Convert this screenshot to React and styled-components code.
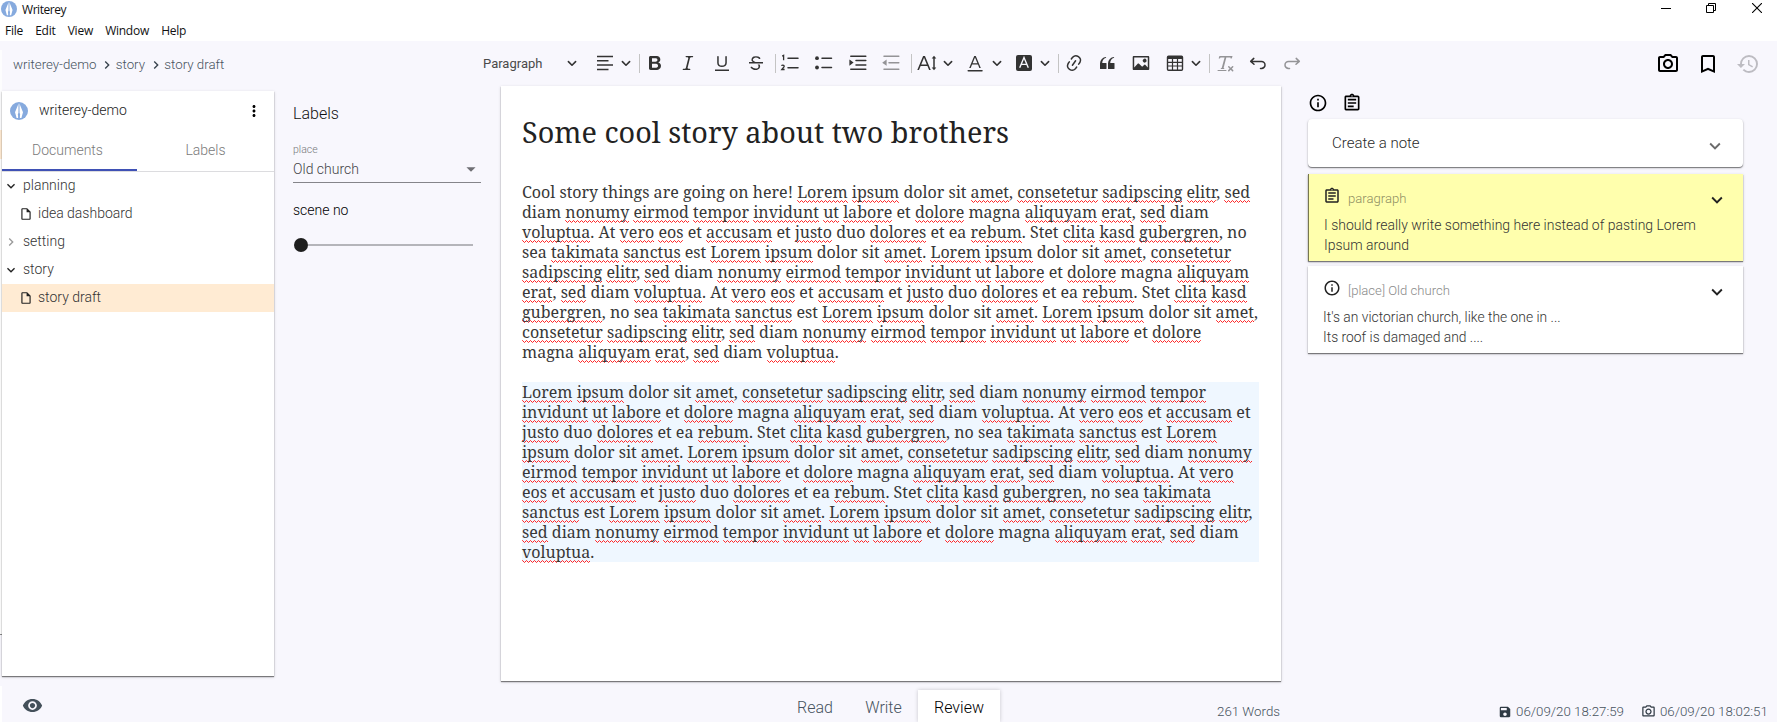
import React from "react";
import styled, { createGlobalStyle, css } from "styled-components";
import {
  MdOutlinePhotoCamera,
  MdBookmarkBorder,
  MdHistory,
  MdInfoOutline,
  MdOutlineAssignment,
  MdVisibility,
  MdSave,
  MdOutlineInsertDriveFile,
  MdMoreVert,
  MdExpandMore,
  MdChevronRight,
  MdArrowDropDown,
} from "react-icons/md";

const GlobalStyle = createGlobalStyle`
  * { box-sizing: border-box; }
  body { margin: 0; background: #fff; font-family: Roboto, "Liberation Sans", sans-serif; font-weight: 300; }
  svg { display: block; flex: none; }
`;

const Window = styled.div`
  width: 1777px;
  height: 722px;
  overflow: hidden;
  display: flex;
  flex-direction: column;
`;

/* window chrome */
const Chrome = styled.header`
  height: 41px;
  flex: none;
  background: #fff;
  font-family: "Open Sans", "Noto Sans", sans-serif;
  font-weight: 400;
  font-size: 12px;
  color: #111;
`;
const TitleBar = styled.div`
  height: 20px;
  display: flex;
  align-items: center;
  padding: 0 15px 2px 1px;
`;
const Title = styled.span`
  margin-left: 5px;
  flex: 1;
  padding-top: 1px;
  letter-spacing: -0.45px;
`;
const WindowButtons = styled.div`
  display: flex;
  gap: 35px;
  padding: 0 0 2px;
  svg:last-child { margin-left: 1px; }
`;
const MenuBar = styled.nav`
  display: flex;
  gap: 12.2px;
  padding-left: 5px;
  line-height: 22px;
  letter-spacing: -0.25px;
`;

/* application area */
const Shell = styled.div`
  flex: 1;
  display: flex;
  background: #f8f7fd;
  min-height: 0;
`;
const Edge = styled.div`
  width: 2px;
  flex: none;
  display: flex;
  flex-direction: column;
`;
const EdgePart = styled.div`
  height: ${(p) => p.$h}px;
  background: ${(p) => p.$c};
`;
const Workspace = styled.div`
  flex: 1;
  display: flex;
  flex-direction: column;
  min-width: 0;
`;
const TopBar = styled.div`
  height: 45px;
  flex: none;
  display: flex;
  align-items: flex-start;
`;
const Breadcrumb = styled.div`
  width: 481px;
  height: 46px;
  flex: none;
  display: flex;
  align-items: center;
  padding: 1px 0 0 11px;
  font-size: 13.3px;
  color: #47535d;
  svg { color: #37424c; margin: 1px 0.5px 0 2.8px; }
`;
const Toolbar = styled.div`
  display: flex;
  align-items: center;
  height: 44px;
  width: 1173px;
  color: #333;
`;
const StyleName = styled.span`
  width: 60px;
  font-size: 13px;
  font-weight: 400;
  color: #4a4a4a;
`;
const Tool = styled.span`
  width: ${(p) => p.$w || 20}px;
  margin-left: ${(p) => p.$ml}px;
  flex: none;
  display: flex;
  justify-content: center;
  opacity: ${(p) => (p.$off ? 0.5 : 1)};
`;
const Separator = styled.span`
  width: 1px;
  height: 19px;
  margin-left: ${(p) => p.$ml}px;
  background: #c4c4c4;
`;
const Actions = styled.div`
  display: flex;
  gap: 16px;
  padding-top: 11px;
  color: #000;
  svg:last-child { color: #bdbcc2; }
`;

const Main = styled.div`
  flex: 1;
  display: flex;
  min-height: 0;
`;

const raised = css`
  background: #fff;
  box-shadow: 0 1px 1px rgba(0, 0, 0, 0.45), 0 1px 3px rgba(0, 0, 0, 0.18);
`;

/* project sidebar */
const Sidebar = styled.aside`
  ${raised}
  width: 272px;
  height: 585px;
  margin-top: 5px;
  flex: none;
`;
const ProjectHeader = styled.div`
  height: 39px;
  display: flex;
  align-items: center;
  padding: 1px 11px 0 8px;
  color: #000;
`;
const ProjectName = styled.span`
  flex: 1;
  margin-left: 11px;
  padding-bottom: 2px;
  font-size: 14px;
  color: #222;
`;
const Tabs = styled.div`
  display: flex;
  height: 42px;
  border-bottom: 1px solid #dcdcdf;
`;
const Tab = styled.div`
  flex: ${(p) => (p.$active ? "none" : 1)};
  width: 135px;
  height: 41px;
  display: flex;
  align-items: center;
  justify-content: center;
  font-size: 14px;
  color: #7a7a7a;
  ${(p) => p.$active && "border-bottom: 2px solid #3f51b5;"}
  padding: ${(p) => (p.$active ? "0 4px 0 0" : "0 0 2px 0")};
`;
const TreeRow = styled.div`
  height: 28px;
  display: flex;
  align-items: center;
  font-size: 14px;
  color: #333;
  padding: 0 0 2px ${(p) => (p.$file ? 17 : 1)}px;
  background: ${(p) => (p.$selected ? "#ffebd3" : "transparent")};
`;
const TreeIcon = styled.span`
  width: ${(p) => (p.$file ? 19 : 20)}px;
  padding-top: 1px;
  color: ${(p) => (p.$dim ? "#9a9a9a" : "#222")};
`;

/* labels panel */
const LabelsPanel = styled.section`
  width: 188px;
  margin: 0 20px 0 19px;
  flex: none;
  display: flex;
  flex-direction: column;
`;
const PanelTitle = styled.h2`
  margin: 18px 0 0;
  font-size: 16px;
  line-height: 20px;
  font-weight: 300;
  color: #111;
`;
const FieldLabel = styled.div`
  margin-top: 19px;
  font-size: 10.5px;
  line-height: 14px;
  color: #77777b;
`;
const Select = styled.div`
  height: 26px;
  display: flex;
  align-items: center;
  justify-content: space-between;
  padding-bottom: 1px;
  border-bottom: 1px solid #85858a;
  font-size: 14px;
  color: #444448;
  svg { color: #6f6f74; margin-right: -1px; }
`;
const SliderLabel = styled.div`
  margin-top: 18px;
  line-height: 18px;
  font-size: 14px;
  color: #000;
`;
const Slider = styled.div`
  display: flex;
  align-items: center;
  margin: 19px 0 0 1px;
`;
const Knob = styled.span`
  width: 14px;
  height: 14px;
  border-radius: 50%;
  background: #1e1e1e;
`;
const Track = styled.span`
  width: 165px;
  height: 2px;
  background: #b5b5ba;
`;

/* document */
const Page = styled.article`
  ${raised}
  width: 780px;
  flex: none;
  padding: 0 22px 0 21px;
  font-family: "Noto Serif", "DejaVu Serif Condensed", serif;
  font-weight: 400;
  color: #222;
`;
const DocTitle = styled.h1`
  margin: 26px 0 30px;
  font-size: 28.8px;
  line-height: 40px;
  font-weight: 400;
  white-space: nowrap;
`;
const Paragraph = styled.p`
  margin: 0 0 20px;
  font-size: 16.02px;
  line-height: 20px;
  white-space: pre-line;
  color: #383838;
  background: ${(p) => (p.$marked ? "#eff7ff" : "transparent")};
`;
const Misspelled = styled.span`
  background-image:
    linear-gradient(90deg, #f55 1px, transparent 1px),
    linear-gradient(90deg, transparent 1px, #f22 1px, #f22 2px, transparent 2px, transparent 3px, #f22 3px),
    linear-gradient(90deg, transparent 2px, #f55 2px, #f55 3px, transparent 3px);
  background-size: 4px 1px;
  background-repeat: repeat-x;
  background-position: 0 calc(100% - 2px), 0 calc(100% - 1px), 0 100%;
`;

/* notes */
const Notes = styled.section`
  width: 435px;
  margin-left: 27px;
  display: flex;
  flex-direction: column;
`;
const NoteFilters = styled.div`
  height: 33px;
  display: flex;
  gap: 14px;
  padding: 7px 0 0 0;
  color: #000;
`;
const CreateNote = styled.div`
  ${raised}
  height: 48px;
  border-radius: 4px;
  display: flex;
  align-items: center;
  justify-content: space-between;
  padding: 0 17px 0 24px;
  font-size: 15px;
  color: #2a2a2a;
  svg { color: #6b6b6b; margin-top: 5px; }
`;
const Note = styled.div`
  ${raised}
  height: 87px;
  margin-top: ${(p) => p.$mt}px;
  padding: 13px 15px 0 15px;
  ${(p) => p.$yellow && "background: #ffffad; border-left: 1px solid #77774f; padding-left: 14px;"}
`;
const NoteHead = styled.div`
  height: 25px;
  display: flex;
  align-items: flex-start;
  color: #222;
`;
const NoteTopic = styled.span`
  flex: 1;
  margin-left: 7px;
  padding-top: 3px;
  font-size: 13.1px;
  line-height: 18px;
  color: ${(p) => (p.$yellow ? "#8f8f63" : "#8a8a8a")};
`;
const Drop = styled.span`
  padding-top: 2px;
`;
const NoteText = styled.div`
  padding: ${(p) => (p.$yellow ? "3px 0 0 1px" : "3px 0 0 0")};
  font-size: ${(p) => (p.$yellow ? 13.98 : 13.85)}px;
  line-height: 20px;
  color: #333;
  white-space: pre-line;
`;

/* footer */
const Footer = styled.footer`
  height: 41px;
  flex: none;
  display: flex;
  align-items: flex-end;
`;
const EyeSlot = styled.div`
  width: 770px;
  padding: 0 0 6px 20px;
  color: #44505a;
`;
const ModeTab = styled.div`
  height: 32px;
  display: flex;
  align-items: center;
  justify-content: center;
  font-size: 16px;
  padding-top: 2px;
  width: ${(p) => p.$w}px;
  margin-left: ${(p) => p.$ml || 0}px;
  color: ${(p) => (p.$active ? "#000" : "#47535d")};
  ${(p) => p.$active && "background: #fff; box-shadow: 0 0 4px rgba(0, 0, 0, 0.2);"}
`;
const Status = styled.div`
  display: flex;
  align-items: center;
  gap: 4px;
  margin-left: ${(p) => p.$ml}px;
  height: 21px;
  font-size: 13.3px;
  color: #47535d;
  white-space: nowrap;
  svg { color: #2f3a44; }
`;

const Logo = ({ size }) => (
  <svg width={size} height={size} viewBox="0 0 18 18">
    <circle cx="9" cy="9" r="9" fill="#86aade" />
    <path d="M8.7 1.2 5 10.2 6.6 16h1.6l.5-5.4zM9.3 1.2 13 10.2 11.4 16H9.8l-.5-5.4z" fill="#fff" />
    <path d="M9 9.5 7.9 12.4 8.5 16.4h1l.6-4z" fill="#86aade" />
    <path d="M9 2v8" stroke="#86aade" strokeWidth=".7" />
  </svg>
);

const Ck = ({ d, children }) => (
  <svg width="20" height="20" viewBox="0 0 20 20" fill="currentColor">
    {d && <path d={d} />}
    {children}
  </svg>
);
const Caret = () => (
  <svg width="10" height="10" viewBox="0 0 10 10" fill="none" stroke="currentColor" strokeWidth="1.6" strokeLinecap="round" strokeLinejoin="round">
    <path d="M1.4 3.6 5 7.2l3.6-3.6" />
  </svg>
);

const icons = {
  align: <Ck><path d="M2 3.5h16M2 7.8h11.5M2 12.1h16M2 16.4h11.5" stroke="currentColor" strokeWidth="1.5" /></Ck>,
  bold: <Ck d="M10.187 17H5.773c-.637 0-1.092-.138-1.364-.415-.273-.277-.409-.718-.409-1.323V4.738c0-.617.14-1.062.419-1.332.279-.27.73-.406 1.354-.406h4.68c.69 0 1.288.041 1.793.124.506.083.96.242 1.36.478.341.197.644.447.906.75a3.262 3.262 0 0 1 .808 2.162c0 1.401-.722 2.426-2.167 3.075C15.05 10.175 16 11.315 16 13.01a3.756 3.756 0 0 1-2.296 3.504 6.1 6.1 0 0 1-1.517.377c-.571.073-1.238.11-2 .11zm-.217-6.217H7v4.087h3.069c1.977 0 2.965-.69 2.965-2.072 0-.707-.256-1.22-.768-1.537-.512-.319-1.277-.478-2.296-.478zM7 5.13v3.619h2.606c.729 0 1.292-.067 1.69-.2a1.6 1.6 0 0 0 .91-.765c.165-.267.247-.566.247-.897 0-.707-.26-1.176-.778-1.409-.519-.232-1.31-.348-2.375-.348H7z" />,
  italic: <Ck d="M9.586 14.633l.021.004c-.036.335.095.655.393.962.082.083.173.15.274.201h1.474a.6.6 0 1 1 0 1.2H5.304a.6.6 0 0 1 0-1.2h1.15c.474-.07.809-.182 1.005-.334.157-.122.291-.32.404-.597l2.416-9.55a1.053 1.053 0 0 0-.281-.823 1.12 1.12 0 0 0-.442-.296H8.15a.6.6 0 0 1 0-1.2h6.443a.6.6 0 1 1 0 1.2h-1.195c-.376.056-.65.155-.823.296-.215.175-.423.439-.623.79l-2.366 9.347z" />,
  underline: <Ck d="M3 18v-1.5h14V18zm2.2-8V3.6c0-.4.4-.6.8-.6.3 0 .7.2.7.6v6.2c0 2 1.3 2.8 3.2 2.8 1.9 0 3.4-.9 3.4-2.9V3.6c0-.3.4-.5.8-.5.3 0 .7.2.7.5V10c0 2.7-2.2 4-4.9 4-2.6 0-4.7-1.2-4.7-4z" />,
  strike: <Ck d="M7 16.4c-.8-.4-1.5-.9-2.2-1.5a.6.6 0 0 1-.2-.5l.3-.6h1c1 1.2 2.1 1.7 3.7 1.7 1 0 1.8-.3 2.3-.6.6-.4.6-1.2.6-1.3.2-1.2-.9-2.1-.9-2.1h2.1c.3.7.4 1.2.4 1.7v.8l-.6 1.2c-.6.8-1.1 1-1.6 1.2a6 6 0 0 1-2.4.6c-1 0-1.8-.3-2.5-.6zM6.8 9L6 8.3c-.4-.5-.5-.8-.5-1.6 0-.7.1-1.3.5-1.8.4-.6 1-1 1.6-1.3a6.3 6.3 0 0 1 4.7 0 4 4 0 0 1 1.7 1l.3.7c0 .1.2.4-.2.7-.4.2-.9.1-1 0a3 3 0 0 0-1.2-1c-.4-.2-1-.3-2-.4-.7 0-1.4.2-2 .6-.8.6-1 .8-1 1.5 0 .8.5 1 1.2 1.5.6.4 1.1.7 1.9 1H6.8zM3 10.5V9h14v1.5z" />,
  numbered: (
    <Ck>
      <path d="M8 5.2h10M8 14.8h10" stroke="currentColor" strokeWidth="1.5" strokeLinecap="round" />
      <path d="M2.2 3.1 3.6 2.4v4.8M1.6 12.9c.3-1 2.6-1.1 2.6.3 0 1-1.5 1.8-2.5 3.3h2.9" fill="none" stroke="currentColor" strokeWidth="1.3" />
    </Ck>
  ),
  bulleted: (
    <Ck>
      <path d="M8 5.2h9.5M8 14.5h9.5" stroke="currentColor" strokeWidth="1.5" strokeLinecap="round" />
      <circle cx="3" cy="5.2" r="1.9" />
      <circle cx="3" cy="14.5" r="1.9" />
    </Ck>
  ),
  indent: (
    <Ck d="M1.4 6.4 5.6 9.6 1.4 12.8z">
      <path d="M2.8 3.3h15M8 7.6h9.8M8 11.9h9.8M2.8 16.2h15" stroke="currentColor" strokeWidth="1.5" strokeLinecap="round" />
    </Ck>
  ),
  outdent: (
    <Ck d="M5.6 6.6 1.2 9.7 5.6 12.8z">
      <path d="M3 3.3h14.8M8 9.7h9.8M3 16.2h14.8" stroke="currentColor" strokeWidth="1.5" strokeLinecap="round" />
    </Ck>
  ),
  size: (
    <Ck d="M9.816 11.5L7.038 4.785 4.261 11.5h5.555zm.62 1.5H3.641l-1.666 4.028H.312l5.789-14h1.875l5.789 14h-1.663L10.436 13z">
      <path d="M17 5v10" stroke="currentColor" strokeWidth="1.5" />
      <path d="M17 2.7l2.3 2.9h-4.6zM17 17.3l2.3-2.9h-4.6z" />
    </Ck>
  ),
  color: <Ck d="M12.4 10.3L10 4.5l-2.4 5.8h4.8zm.5 1.2H7.1L5.7 15H4.2l5-12h1.6l5 12h-1.5L13 11.5zm4.1 7H3.2a.7.7 0 0 1 0-1.5h13.8a.7.7 0 0 1 0 1.5z" />,
  background: (
    <Ck>
      <rect x="2" y="2" width="16" height="16" rx="2" />
      <path d="M5.7 14.8 10 4.6l4.3 10.2M7 11.4h6" fill="none" stroke="#f8f7fd" strokeWidth="1.4" />
    </Ck>
  ),
  link: <Ck d="M11.077 15l.991-1.416a.75.75 0 1 1 1.229.86l-1.148 1.64a.748.748 0 0 1-.217.206 5.251 5.251 0 0 1-8.503-5.955.741.741 0 0 1 .12-.274l1.147-1.639a.75.75 0 1 1 1.228.86L4.933 10.7l.006.003a3.75 3.75 0 0 0 6.132 4.294l.006.004zm5.494-5.335a.748.748 0 0 1-.12.274l-1.147 1.639a.75.75 0 1 1-1.228-.86l.86-1.23a3.75 3.75 0 0 0-6.144-4.301l-.86 1.229a.75.75 0 0 1-1.229-.86l1.148-1.64a.748.748 0 0 1 .217-.206 5.251 5.251 0 0 1 8.503 5.955zm-4.563-2.532a.75.75 0 0 1 .184 1.045l-3.155 4.505a.75.75 0 1 1-1.229-.86l3.155-4.506a.75.75 0 0 1 1.045-.184z" />,
  quote: <Ck d="M3 10.423a6.5 6.5 0 0 1 6.056-6.408l.038.67C6.448 5.423 5.354 7.663 5.22 10H9c.552 0 .5.432.5.986v4.511c0 .554-.448.503-1 .503h-5c-.552 0-.5-.449-.5-1.003v-4.574zm8 0a6.5 6.5 0 0 1 6.056-6.408l.038.67c-2.646.739-3.74 2.979-3.873 5.315H17c.552 0 .5.432.5.986v4.511c0 .554-.448.503-1 .503h-5c-.552 0-.5-.449-.5-1.003v-4.574z" />,
  image: <Ck d="M6.91 10.54c.26-.23.64-.21.88.03l3.36 3.14 2.23-2.06a.64.64 0 0 1 .87 0l2.52 2.97V4.5H3.2v10.12l3.71-4.08zm10.27-7.51c.6 0 1.09.47 1.09 1.05v11.84c0 .59-.49 1.06-1.09 1.06H2.79c-.6 0-1.09-.47-1.09-1.06V4.08c0-.58.49-1.05 1.1-1.05h14.38zm-5.22 5.56a1.96 1.96 0 1 1 3.4-1.96 1.96 1.96 0 0 1-3.4 1.96z" />,
  table: (
    <Ck>
      <path fillRule="evenodd" d="M3.5 2.5h13A1.7 1.7 0 0 1 18.2 4.2v12a1.7 1.7 0 0 1-1.7 1.7h-13a1.7 1.7 0 0 1-1.7-1.7v-12A1.7 1.7 0 0 1 3.5 2.5zM3.2 6v2.7h3.7V6zm4.9 0v2.7h3.8V6zm5 0v2.7h3.7V6zM3.2 9.9v2.5h3.7V9.9zm4.9 0v2.5h3.8V9.9zm5 0v2.5h3.7V9.9zM3.2 13.6v2.9h3.7v-2.9zm4.9 0v2.9h3.8v-2.9zm5 0v2.9h3.7v-2.9z" />
    </Ck>
  ),
  clear: <Ck d="M8.69 14.915c.053.052.173.083.36.093a.366.366 0 0 1 .345.485l-.003.01a.738.738 0 0 1-.697.497h-2.67a.374.374 0 0 1-.353-.496l.013-.038a.681.681 0 0 1 .644-.458c.197-.012.325-.043.386-.093a.28.28 0 0 0 .072-.11L9.592 4.5H6.269c-.359-.017-.609.013-.75.09-.142.078-.289.265-.442.563-.192.29-.516.464-.864.464H4.17a.43.43 0 0 1-.407-.569L4.46 3h13.08l-.62 2.043a.81.81 0 0 1-.775.574h-.114a.486.486 0 0 1-.486-.486c.001-.284-.054-.464-.167-.54-.112-.076-.367-.106-.766-.091h-3.28l-2.68 10.257c-.006.074.007.127.038.158zM3 17h8a.5.5 0 1 1 0 1H3a.5.5 0 1 1 0-1zm11.299 1.17a.75.75 0 1 1-1.06-1.06l1.414-1.415-1.415-1.414a.75.75 0 0 1 1.06-1.06l1.415 1.414 1.414-1.415a.75.75 0 1 1 1.06 1.06l-1.413 1.415 1.414 1.415a.75.75 0 0 1-1.06 1.06l-1.415-1.414-1.414 1.414z" />,
  undo: <Ck><path d="M5.8 5.4 2.7 8.4l3.3 2.9M2.9 8.4h10.6a3.5 3.5 0 0 1 0 7h-1" fill="none" stroke="currentColor" strokeWidth="1.5" strokeLinecap="round" strokeLinejoin="round" /></Ck>,
  redo: <Ck><path d="M14.2 5.4l3.1 3-3.3 2.9M17.1 8.4H6.5a3.5 3.5 0 0 0 0 7h1" fill="none" stroke="currentColor" strokeWidth="1.5" strokeLinecap="round" strokeLinejoin="round" /></Ck>,
  caret: <Caret />,
};

/* [icon, space before it, disabled]; "|" is a separator */
const tools = [
  ["caret", 23], ["align", 17], ["caret", 5], ["|", 7],
  ["bold", 5], ["italic", 13], ["underline", 14], ["strike", 14], ["|", 9],
  ["numbered", 4], ["bulleted", 14], ["indent", 14], ["outdent", 13, true], ["|", 10],
  ["size", 5], ["caret", 5], ["color", 11], ["caret", 6], ["background", 11], ["caret", 5], ["|", 7],
  ["link", 5], ["quote", 13], ["image", 14], ["table", 14], ["caret", 5], ["|", 7],
  ["clear", 5, true], ["undo", 13], ["redo", 14, true],
];

const known = new Set("cool story things are going on here dolor sit diam et magna at est duo ea stet no sea".split(" "));
const Spellchecked = ({ text }) =>
  text.split(/([A-Za-z]+)/).map((part, i) =>
    i % 2 && !known.has(part.toLowerCase()) ? <Misspelled key={i}>{part}</Misspelled> : part
  );

const lorem =
  "Lorem ipsum dolor sit amet, consetetur sadipscing elitr, sed diam nonumy eirmod tempor invidunt ut labore et dolore magna aliquyam erat, sed diam voluptua. At vero eos et accusam et justo duo dolores et ea rebum. Stet clita kasd gubergren, no sea takimata sanctus est Lorem ipsum dolor sit amet.";
const loremShort =
  "Lorem ipsum dolor sit amet, consetetur sadipscing elitr, sed diam nonumy eirmod tempor invidunt ut labore et dolore magna aliquyam erat, sed diam voluptua.";

export default function App() {
  return (
    <Window>
      <GlobalStyle />
      <Chrome>
        <TitleBar>
          <Logo size={16} />
          <Title>Writerey</Title>
          <WindowButtons>
            <svg width="10" height="10" viewBox="0 0 10 10"><path d="M0 5.5h10" stroke="#000" /></svg>
            <svg width="10" height="10" viewBox="0 0 10 10" fill="none" stroke="#000"><path d="M.5 2.5h7v7h-7zM2.5 2.5v-2h7v7h-2" /></svg>
            <svg width="10" height="10" viewBox="0 0 10 10"><path d="M0 0l10 10M10 0 0 10" stroke="#000" strokeWidth="1.1" /></svg>
          </WindowButtons>
        </TitleBar>
        <MenuBar>
          {["File", "Edit", "View", "Window", "Help"].map((m) => <span key={m}>{m}</span>)}
        </MenuBar>
      </Chrome>
      <Shell>
        <Edge>
          <EdgePart $h={9} $c="#f8f7fd" />
          <EdgePart $h={80} $c="#fdfdfe" />
          <EdgePart $h={29} $c="#ffebd3" />
          <EdgePart $h={475} $c="#fff" />
          <EdgePart $h={1} $c="#8a8a8a" />
          <EdgePart $h={51} $c="#f8f7fd" />
          <EdgePart $h={36} $c="#fff" />
        </Edge>
        <Workspace>
          <TopBar>
            <Breadcrumb>
              writerey-demo<MdChevronRight size={16} />story<MdChevronRight size={16} />story draft
            </Breadcrumb>
            <Toolbar>
              <StyleName>Paragraph</StyleName>
              {tools.map(([name, ml, off], i) =>
                name === "|" ? (
                  <Separator key={i} $ml={ml} />
                ) : (
                  <Tool key={i} $ml={ml} $w={name === "caret" ? 12 : 20} $off={off}>{icons[name]}</Tool>
                )
              )}
            </Toolbar>
            <Actions>
              <MdOutlinePhotoCamera size={24} />
              <MdBookmarkBorder size={24} />
              <MdHistory size={24} />
            </Actions>
          </TopBar>
          <Main>
            <Sidebar>
              <ProjectHeader>
                <Logo size={18} />
                <ProjectName>writerey-demo</ProjectName>
                <MdMoreVert size={18} />
              </ProjectHeader>
              <Tabs>
                <Tab $active>Documents</Tab>
                <Tab>Labels</Tab>
              </Tabs>
              <TreeRow><TreeIcon><MdExpandMore size={16} /></TreeIcon>planning</TreeRow>
              <TreeRow $file><TreeIcon $file><MdOutlineInsertDriveFile size={14} /></TreeIcon>idea dashboard</TreeRow>
              <TreeRow><TreeIcon $dim><MdChevronRight size={16} /></TreeIcon>setting</TreeRow>
              <TreeRow><TreeIcon><MdExpandMore size={16} /></TreeIcon>story</TreeRow>
              <TreeRow $file $selected><TreeIcon $file><MdOutlineInsertDriveFile size={14} /></TreeIcon>story draft</TreeRow>
            </Sidebar>
            <LabelsPanel>
              <PanelTitle>Labels</PanelTitle>
              <FieldLabel>place</FieldLabel>
              <Select>Old church<MdArrowDropDown size={22} /></Select>
              <SliderLabel>scene no</SliderLabel>
              <Slider><Knob /><Track /></Slider>
            </LabelsPanel>
            <Page>
              <DocTitle>Some cool story about two brothers</DocTitle>
              <Paragraph><Spellchecked text={`Cool story things are going on here! ${lorem} ${lorem} ${loremShort.replace("dolore magna", "dolore\nmagna")}`} /></Paragraph>
              <Paragraph $marked><Spellchecked text={`${lorem} ${lorem} ${loremShort}`} /></Paragraph>
            </Page>
            <Notes>
              <NoteFilters>
                <MdInfoOutline size={20} />
                <MdOutlineAssignment size={20} />
              </NoteFilters>
              <CreateNote>Create a note<MdExpandMore size={22} /></CreateNote>
              <Note $mt={7} $yellow>
                <NoteHead>
                  <MdOutlineAssignment size={18} />
                  <NoteTopic $yellow>paragraph</NoteTopic>
                  <Drop><MdExpandMore size={22} /></Drop>
                </NoteHead>
                <NoteText $yellow>{"I should really write something here instead of pasting Lorem\nIpsum around"}</NoteText>
              </Note>
              <Note $mt={5}>
                <NoteHead>
                  <MdInfoOutline size={18} />
                  <NoteTopic>[place] Old church</NoteTopic>
                  <Drop><MdExpandMore size={22} /></Drop>
                </NoteHead>
                <NoteText>{"It's an victorian church, like the one in ...\nIts roof is damaged and ...."}</NoteText>
              </Note>
            </Notes>
          </Main>
          <Footer>
            <EyeSlot><MdVisibility size={21} /></EyeSlot>
            <ModeTab $w={86}>Read</ModeTab>
            <ModeTab $w={51}>Write</ModeTab>
            <ModeTab $w={82} $ml={9} $active>Review</ModeTab>
            <Status $ml={217}>261 Words</Status>
            <Status $ml={218}><MdSave size={14} />06/09/20 18:27:59</Status>
            <Status $ml={17}><MdOutlinePhotoCamera size={15} />06/09/20 18:02:51</Status>
          </Footer>
        </Workspace>
      </Shell>
    </Window>
  );
}
